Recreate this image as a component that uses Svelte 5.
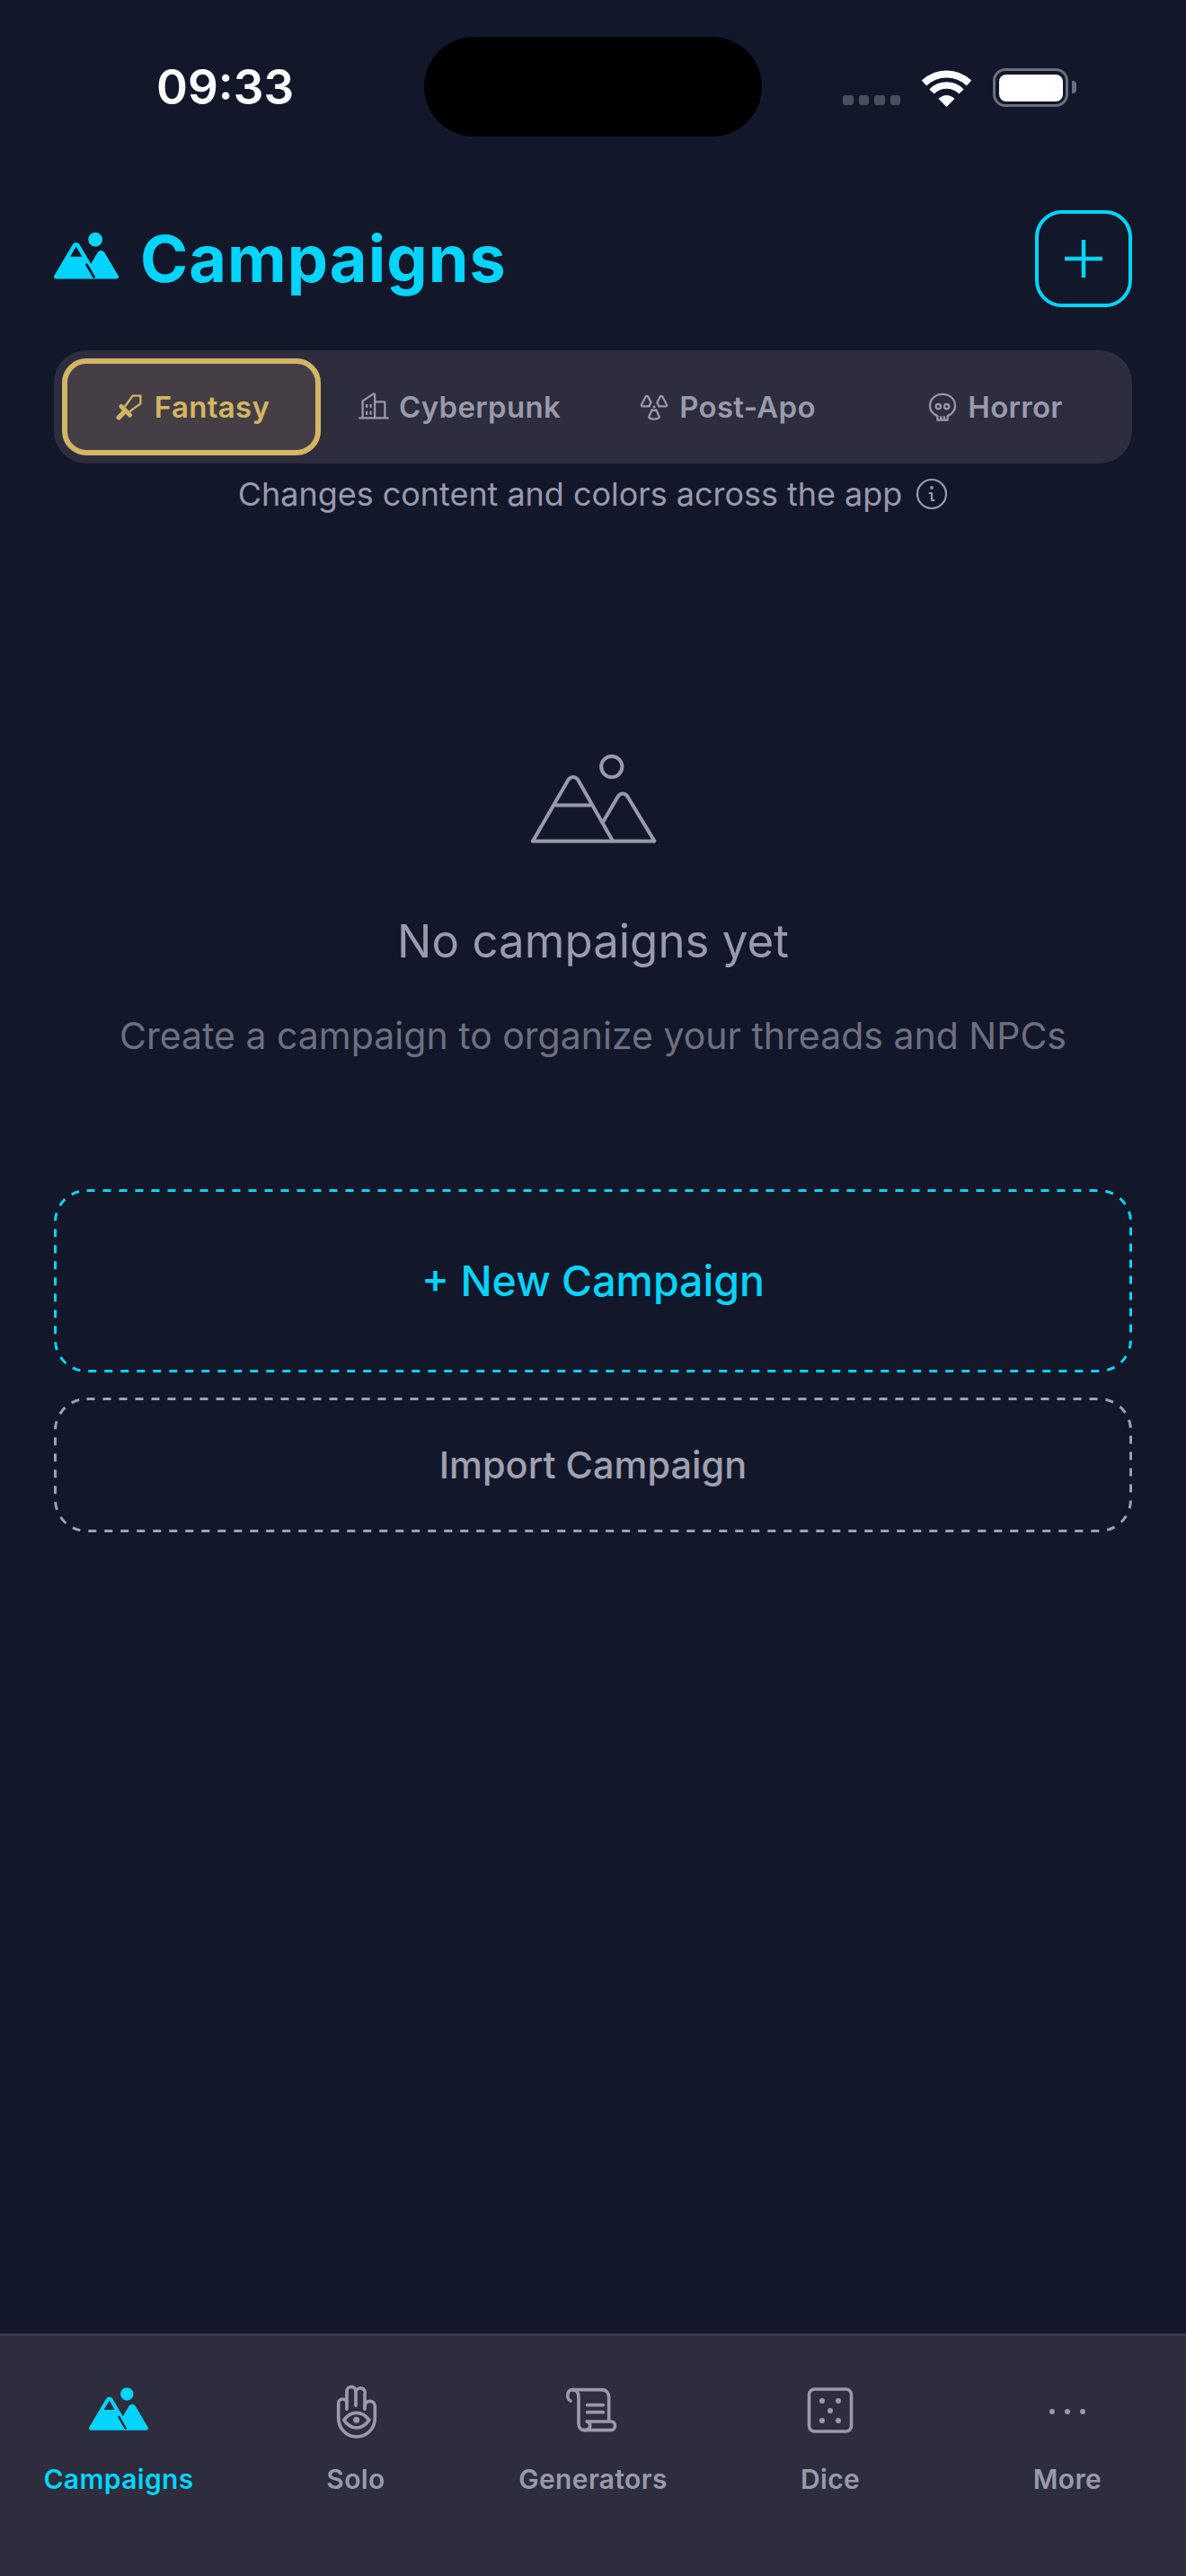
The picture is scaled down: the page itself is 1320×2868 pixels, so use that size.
<script>
  const themes = ['Fantasy', 'Cyberpunk', 'Post-Apo', 'Horror'];
  const tabs = ['Campaigns', 'Solo', 'Generators', 'Dice', 'More'];
  const mountainsFill =
    'M164,80a28,28,0,1,0-28-28A28,28,0,0,0,164,80Zm90.88,115.92-54.56-92.08A15.87,15.87,0,0,0,186.55,96h0a15.85,15.85,0,0,0-13.76,7.84L146.63,148l-44.84-76.1a16,16,0,0,0-27.58,0L1.11,195.94A8,8,0,0,0,8,208H248a8,8,0,0,0,6.88-12.08ZM88,80l23.57,40H64.43Z';
</script>

<div class="page">
  <div class="status">
    <span class="time">09:33</span>
    <div class="island"></div>
    <div class="status-icons">
      <div class="signal"><i></i><i></i><i></i><i></i></div>
      <svg class="wifi" viewBox="0 0 57 42" width="57" height="42">
        <path d="M3.5,15.5 A36,36 0 0 1 53.5,15.5" fill="none" stroke="#fff" stroke-width="8" />
        <path d="M12,25 A23,23 0 0 1 45,25" fill="none" stroke="#fff" stroke-width="7.5" />
        <path d="M28.5,42 L19.5,33 Q28.5,25 37.5,33 Z" fill="#fff" />
      </svg>
      <div class="battery"><div class="charge"></div></div>
      <div class="cap"></div>
    </div>
  </div>

  <header class="head">
    <div class="title-row">
      <svg class="title-icon" viewBox="0 0 256 256" width="72" height="72">
        <path d={mountainsFill} fill="#00d4ff" />
        <path d="M130,152 L158,200" stroke="#12182a" stroke-width="10" stroke-linecap="round" />
      </svg>
      <h1>Campaigns</h1>
    </div>
    <button class="add" aria-label="Add">
      <svg viewBox="0 0 42 42" width="42" height="42">
        <path d="M21,0 V42 M0,21 H42" stroke="#00d4ff" stroke-width="4.5" stroke-linecap="round" />
      </svg>
    </button>
  </header>

  <div class="segments">
    {#each themes as t, i}
      <div class="segment" class:active={i === 0}>
        <svg viewBox="0 0 256 256" width="36" height="36">
          {#if t === 'Fantasy'}
            <g fill="none" stroke="#d4b565" stroke-linejoin="miter">
              <path d="M92,126 L154,40 H216 V102 L130,164" stroke-width="16" />
              <path d="M64,124 L132,192" stroke-width="36" stroke-linecap="round" />
              <path d="M84,172 L44,212" stroke-width="38" stroke-linecap="round" />
            </g>
          {:else if t === 'Cyberpunk'}
            <path fill="#9a9aac" d="M240,208H224V96a16,16,0,0,0-16-16H144V32a16,16,0,0,0-24.88-13.32L39.12,72A16,16,0,0,0,32,85.34V208H16a8,8,0,0,0,0,16H240a8,8,0,0,0,0-16ZM208,96V208H144V96ZM48,85.34,128,32V208H48ZM112,112v16a8,8,0,0,1-16,0V112a8,8,0,1,1,16,0Zm-32,0v16a8,8,0,0,1-16,0V112a8,8,0,1,1,16,0Zm0,56v16a8,8,0,0,1-16,0V168a8,8,0,0,1,16,0Zm32,0v16a8,8,0,0,1-16,0V168a8,8,0,0,1,16,0Z" />
          {:else if t === 'Post-Apo'}
            <g fill="none" stroke="#9a9aac" stroke-width="16" stroke-linejoin="round">
              <path d="M62,46 Q71,36 80,46 L104,94 Q94,104 92,124 H38 Q24,124 28,110 Z" />
              <path d="M194,46 Q185,36 176,46 L152,94 Q162,104 164,124 H218 Q232,124 228,110 Z" />
              <path d="M128,156 Q118,156 112,150 L88,204 Q84,214 94,218 Q128,232 162,218 Q172,214 168,204 L144,150 Q138,156 128,156 Z" />
            </g>
            <circle cx="128" cy="128" r="11" fill="#9a9aac" />
          {:else}
            <g fill="none" stroke="#9a9aac" stroke-width="16" stroke-linejoin="round">
              <path d="M88,232 V200 C50,185 28,150 28,122 C28,65 72,28 128,28 C184,28 228,65 228,122 C228,150 206,185 168,200 V232 Z" />
              <path d="M115,200 V232 M141,200 V232" />
              <circle cx="95" cy="125" r="19" />
              <circle cx="161" cy="125" r="19" />
            </g>
          {/if}
        </svg>
        <span>{t}</span>
      </div>
    {/each}
  </div>

  <div class="hint">
    <span>Changes content and colors across the app</span>
    <svg viewBox="0 0 36 36" width="36" height="36">
      <circle cx="18" cy="18" r="16" fill="none" stroke="#9a9aac" stroke-width="2.2" />
      <circle cx="18" cy="11" r="1.9" fill="#9a9aac" />
      <path d="M15.5,17 H18 V25 H20.5" fill="none" stroke="#9a9aac" stroke-width="2.2" stroke-linecap="round" stroke-linejoin="round" />
    </svg>
  </div>

  <main class="empty">
    <svg viewBox="265 110 430 305" width="143" height="102">
      <g fill="none" stroke="#9a9aac" stroke-width="12" stroke-linecap="round" stroke-linejoin="round">
        <circle cx="541" cy="156" r="35" />
        <path d="M277,405 L397,198 Q412,182 427,198 L545,405" />
        <path d="M514,338 L563,254 Q578,238 593,254 L684,405" />
        <path d="M277,405 H684" />
        <path d="M352,285 H470" />
      </g>
    </svg>
    <h2>No campaigns yet</h2>
    <p>Create a campaign to organize your threads and NPCs</p>
  </main>

  <div class="actions">
    <button class="dash new">
      <svg class="outline" viewBox="0 0 1200 204">
        <rect x="1.5" y="1.5" width="1197" height="201" rx="35" fill="none" stroke="#00d4ff" stroke-width="3" stroke-dasharray="9 9" />
      </svg>
      + New Campaign
    </button>
    <button class="dash import">
      <svg class="outline" viewBox="0 0 1200 150">
        <rect x="1.5" y="1.5" width="1197" height="147" rx="35" fill="none" stroke="#a0a0b0" stroke-width="3" stroke-dasharray="9 9" />
      </svg>
      Import Campaign
    </button>
  </div>

  <nav class="tabs">
    {#each tabs as t, i}
      <div class="tab" class:current={i === 0}>
        <div class="tab-icon">
          {#if t === 'Campaigns'}
            <svg viewBox="0 0 256 256" width="66" height="66">
              <path d={mountainsFill} fill="#00d4ff" />
              <path d="M130,152 L158,200" stroke="#2d2d3d" stroke-width="10" stroke-linecap="round" />
            </svg>
          {:else if t === 'Solo'}
            <svg viewBox="0 0 240 240" width="80" height="80">
              <g fill="none" stroke="#9a9aac" stroke-width="11" stroke-linecap="round" stroke-linejoin="round">
                <path d="M62,140 V92 A14,14 0 0 1 90,92 V52 A15,15 0 0 1 120,52 A15,15 0 0 1 150,62 V112" />
                <path d="M90,92 V112 M120,52 V100" />
                <path d="M150,102 A17,17 0 0 1 184,102 V140 C184,176 158,204 122,204 C88,204 62,176 62,140" />
                <path d="M80,148 C95,128 108,124 122,124 C136,124 150,128 165,148 C150,168 136,174 122,174 C108,174 95,168 80,148 Z" />
              </g>
              <circle cx="122" cy="148" r="10.5" fill="#9a9aac" />
            </svg>
          {:else if t === 'Generators'}
            <svg viewBox="0 0 240 240" width="80" height="80">
              <g fill="none" stroke="#9a9aac" stroke-width="11" stroke-linecap="round" stroke-linejoin="round">
                <path d="M45,84 C32,80 30,48 52,47 H150 C165,47 173,58 173,72 V150" />
                <path d="M52,47 C66,47 72,58 72,72 V160 C72,174 80,182 92,182 H180 C198,182 198,153 180,153 H100" />
                <path d="M100,153 C116,158 114,182 92,182" />
                <path d="M101,98 H154 M101,122 H154" />
              </g>
            </svg>
          {:else if t === 'Dice'}
            <svg viewBox="0 0 80 80" width="80" height="80">
              <rect x="16.5" y="15" width="47" height="47" rx="6" fill="none" stroke="#9a9aac" stroke-width="3.6" />
              <circle cx="31" cy="28" r="3" fill="#9a9aac" />
              <circle cx="49" cy="28" r="3" fill="#9a9aac" />
              <circle cx="40" cy="39" r="3" fill="#9a9aac" />
              <circle cx="31" cy="50" r="3" fill="#9a9aac" />
              <circle cx="49" cy="50" r="3" fill="#9a9aac" />
            </svg>
          {:else}
            <svg viewBox="0 0 80 80" width="80" height="80">
              <circle cx="23" cy="40" r="3" fill="#9a9aac" />
              <circle cx="40" cy="40" r="3" fill="#9a9aac" />
              <circle cx="57" cy="40" r="3" fill="#9a9aac" />
            </svg>
          {/if}
        </div>
        <span>{t}</span>
      </div>
    {/each}
  </nav>
</div>

<style>
  :global(body) {
    margin: 0;
    background: #12182a;
  }

  .page {
    width: 1320px;
    height: 2868px;
    display: flex;
    flex-direction: column;
    background: #12182a;
    font-family: Inter, 'Noto Sans', sans-serif;
    color: #9a9aac;
    overflow: hidden;
  }

  .status {
    position: relative;
    height: 194px;
    flex: none;
    display: flex;
    align-items: center;
    justify-content: space-between;
    padding: 0 122px 0 174px;
    box-sizing: border-box;
  }

  .time {
    color: #fff;
    font-size: 53px;
    font-weight: 600;
  }

  .island {
    position: absolute;
    left: 472px;
    top: 41px;
    width: 376px;
    height: 111px;
    border-radius: 56px;
    background: #000;
  }

  .status-icons {
    display: flex;
    align-items: flex-end;
    height: 44px;
  }

  .signal {
    display: flex;
    gap: 6px;
    margin: 0 23px 0 0;
    padding-bottom: 2px;
  }

  .signal i {
    width: 11.5px;
    height: 11.5px;
    border-radius: 3px;
    background: #4a4f5e;
  }

  .wifi {
    margin-right: 23px;
  }

  .battery {
    width: 84px;
    height: 43px;
    box-sizing: border-box;
    border: 3.5px solid #6b6e7b;
    border-radius: 14px;
    padding: 3.5px;
  }

  .charge {
    height: 100%;
    background: #fff;
    border-radius: 8px;
  }

  .cap {
    width: 5px;
    height: 14px;
    background: #6b6e7b;
    border-radius: 0 4px 4px 0;
    margin: 0 0 15px 4px;
  }

  .head {
    margin: 40px 60px 0;
    display: flex;
    align-items: center;
    justify-content: space-between;
  }

  .title-row {
    display: flex;
    align-items: center;
    gap: 24px;
  }

  h1 {
    margin: 0;
    color: #00d4ff;
    font-size: 72px;
    font-weight: 700;
    line-height: 1;
    letter-spacing: 1px;
  }

  .add {
    width: 108px;
    height: 108px;
    padding: 0;
    background: none;
    border: 4.5px solid #00d4ff;
    border-radius: 30px;
    display: flex;
    align-items: center;
    justify-content: center;
  }

  .segments {
    margin: 48px 60px 0;
    height: 126px;
    box-sizing: border-box;
    padding: 9px;
    display: flex;
    gap: 10px;
    background: #2d2d3d;
    border-radius: 36px;
  }

  .segment {
    width: 288px;
    box-sizing: border-box;
    display: flex;
    align-items: center;
    justify-content: center;
    gap: 10px;
    font-size: 33px;
    font-weight: 600;
    letter-spacing: 0.3px;
    border-radius: 27px;
  }

  .segment.active {
    background: #443f44;
    border: 6px solid #d4b565;
    color: #d4b565;
  }

  .hint {
    margin-top: 12px;
    display: flex;
    align-items: center;
    justify-content: center;
    gap: 15px;
    font-size: 36px;
    line-height: 44px;
    letter-spacing: -0.04px;
  }

  .empty {
    margin-top: 266px;
    display: flex;
    flex-direction: column;
    align-items: center;
  }

  h2 {
    margin: 75px 0 0;
    font-size: 51px;
    font-weight: 400;
    line-height: 66px;
  }

  p {
    margin: 46px 0 0;
    font-size: 41px;
    line-height: 52px;
    color: #6d7080;
  }

  .actions {
    margin: 145px 60px 0;
    display: flex;
    flex-direction: column;
    gap: 28px;
  }

  .dash {
    position: relative;
    background: none;
    border: 0;
    padding: 0;
    font-family: inherit;
    font-weight: 500;
  }

  .outline {
    position: absolute;
    inset: 0;
    width: 100%;
    height: 100%;
  }

  .new {
    height: 204px;
    font-size: 46.5px;
    color: #00d4ff;
  }

  .import {
    height: 150px;
    font-size: 41.5px;
    color: #a0a0b0;
  }

  .tabs {
    margin-top: auto;
    height: 270px;
    box-sizing: border-box;
    border-top: 3px solid #3a3a4c;
    background: #2d2d3d;
    display: flex;
    align-items: flex-start;
  }

  .tab {
    flex: 1;
    display: flex;
    flex-direction: column;
    align-items: center;
    font-size: 30px;
    font-weight: 600;
    line-height: 38px;
    letter-spacing: 0.35px;
  }

  .tab.current {
    color: #00d4ff;
  }

  .tab-icon {
    height: 80px;
    margin-top: 44px;
    margin-bottom: 16px;
    display: flex;
    align-items: center;
  }
</style>
